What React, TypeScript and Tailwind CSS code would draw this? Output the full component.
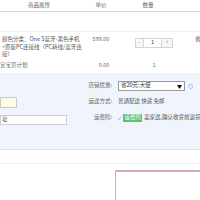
import React from 'react'

const cell1 = 'w-[78px] shrink-0'
const cell2 = 'w-[46px] shrink-0 text-center'
const cell3 = 'w-[48px] shrink-0'

const App: React.FC = () => {
    return (
        <div className="w-[200px] h-[200px] overflow-hidden bg-white text-[#666] text-[5.5px] leading-[7.5px] font-['Noto_Sans_CJK_SC',sans-serif]">
            {/* header */}
            <div className="flex h-[12px] items-center border-b border-[#c6daf0]">
                <div className={cell1 + ' text-center'}>商品属性</div>
                <div className={cell2}>单价</div>
                <div className={cell3 + ' text-center'}>数量</div>
            </div>

            <div className="h-[20px] border-b border-[#f0f0f0]"></div>

            {/* item row */}
            <div className="flex h-[26px] pt-[4px]">
                <div className={cell1 + ' pl-[2px] whitespace-nowrap text-[#555]'}>
                    颜色分类：One S蓝牙-黑色手机<br/>
                    +原装PC连接线（PC转线/蓝牙连<br/>
                    接）
                </div>
                <div className={cell2}>599.00</div>
                <div className={cell3}>
                    <div className="ml-[11px] mt-[2px] flex h-[10px] w-[38px] border border-[#d4d4d4] bg-white text-[#888]">
                        <span className="flex w-[8px] items-center justify-center border-r border-[#d4d4d4] bg-[#f7f7f7]">-</span>
                        <span className="flex flex-1 items-center justify-center text-[#333]">1</span>
                        <span className="flex w-[11px] items-center justify-center border-l border-[#d4d4d4] bg-[#f7f7f7]">+</span>
                    </div>
                </div>
                <div className="pl-[23px] text-[#444]">省</div>
            </div>

            {/* plan row */}
            <div className="flex h-[15px] items-center">
                <div className={cell1}>宜宝贝计划</div>
                <div className={cell2 + ' ml-[3px]'}>0.00</div>
                <div className={cell3 + ' text-center pl-[6px]'}>1</div>
            </div>

            {/* options panel */}
            <div className="flex h-[77px] bg-[#eff4fd] border-b border-[#dce4ee]">
                <div className="w-[86px] shrink-0 pt-[24px]">
                    <div className="h-[11px] w-[17px] border border-[#c9c9c9] bg-[#fffbe8]"></div>
                    <div className="mt-[7px] flex h-[10px] w-[67px] items-center border border-[#cfcfcf] bg-white pl-[1px] text-[#555]">
                        址
                    </div>
                </div>
                <div className="flex-1 pt-[8px]">
                    <div className="flex h-[10px] items-center">
                        <span className="w-[26px] shrink-0 text-right">店铺优惠:</span>
                        <div className="ml-[6px] flex h-[10px] w-[67px] items-center justify-between border border-[#9a9a9a] bg-white px-[2px] text-[#222]">
                            <span>省20元:大促</span>
                            <span className="text-[5px] text-black">▼</span>
                        </div>
                        <span className="ml-[3px] flex h-[5px] w-[5px] items-center justify-center rounded-full border border-[#a9c4e4] text-[3px] text-[#a9c4e4]">?</span>
                    </div>
                    <div className="mt-[6px] flex h-[10px] items-center">
                        <span className="w-[26px] shrink-0 text-right">运送方式:</span>
                        <span className="ml-[6px] text-[#555]">普通配送 快递 免邮</span>
                    </div>
                    <div className="mt-[6px] flex h-[10px] items-center whitespace-nowrap">
                        <span className="w-[26px] shrink-0 text-right">运费险:</span>
                        <span className="ml-[6px] text-[5px] text-[#888]">✓</span>
                        <span className="ml-[2px] bg-[#5cc06c] px-[1px] text-white">运费险</span>
                        <span className="ml-[2px] text-[#555]">卖家送,确认收货前退货</span>
                    </div>
                </div>
            </div>

            <div className="h-[14px] border-b border-[#f2f4f4]"></div>

            <div className="flex pt-[6px]">
                <div className="w-[115px] shrink-0"></div>
                <div className="h-[40px] flex-1 border-t-2 border-l border-[#d8a9b8] bg-white"></div>
            </div>
        </div>
    )
}

export default App
